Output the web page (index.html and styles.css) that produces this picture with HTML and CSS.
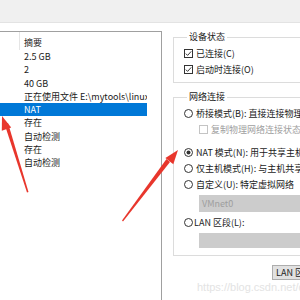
FILE: index.html
```html
<!DOCTYPE html>
<html lang="zh-CN">
<head>
  <meta charset="UTF-8">
  <title>虚拟机设置</title>
  <link rel="stylesheet" href="styles.css">
</head>
<body>
  <div class="topbar"></div>

  <div class="main">
    <div class="list">
      <div class="list-head"><span class="col-sep"></span>摘要</div>
      <div class="row">2.5 GB</div>
      <div class="row">2</div>
      <div class="row">40 GB</div>
      <div class="row">正在使用文件 E:\mytools\linux\centos.vmdk</div>
      <div class="row selected">NAT</div>
      <div class="row">存在</div>
      <div class="row">自动检测</div>
      <div class="row">存在</div>
      <div class="row">自动检测</div>
    </div>

    <div class="settings">
      <fieldset class="group">
        <legend>设备状态</legend>
        <div class="opt first">
          <svg class="box" viewBox="0 0 9 9"><rect x="0.5" y="0.5" width="8" height="8" fill="#fff" stroke="#333"/><path d="M1.8 4.6 L3.6 6.4 L7.2 2.4" fill="none" stroke="#333" stroke-width="1"/></svg>
          <span>已连接(C)</span>
        </div>
        <div class="opt">
          <svg class="box" viewBox="0 0 9 9"><rect x="0.5" y="0.5" width="8" height="8" fill="#fff" stroke="#333"/><path d="M1.8 4.6 L3.6 6.4 L7.2 2.4" fill="none" stroke="#333" stroke-width="1"/></svg>
          <span>启动时连接(O)</span>
        </div>
      </fieldset>

      <fieldset class="group net">
        <legend>网络连接</legend>
        <div class="opt first">
          <svg class="radio" viewBox="0 0 9 9"><circle cx="4.5" cy="4.5" r="4" fill="#fff" stroke="#333"/></svg>
          <span>桥接模式(B): 直接连接物理网络</span>
        </div>
        <div class="opt sub disabled">
          <svg class="box" viewBox="0 0 9 9"><rect x="0.5" y="0.5" width="8" height="8" fill="#fff" stroke="#c4c4c4"/></svg>
          <span>复制物理网络连接状态(P)</span>
        </div>
        <div class="opt gap">
          <svg class="radio" viewBox="0 0 9 9"><circle cx="4.5" cy="4.5" r="4" fill="#fff" stroke="#333"/><circle cx="4.5" cy="4.5" r="2" fill="#333"/></svg>
          <span>NAT 模式(N): 用于共享主机的 IP 地址</span>
        </div>
        <div class="opt">
          <svg class="radio" viewBox="0 0 9 9"><circle cx="4.5" cy="4.5" r="4" fill="#fff" stroke="#333"/></svg>
          <span>仅主机模式(H): 与主机共享的专用网络</span>
        </div>
        <div class="opt">
          <svg class="radio" viewBox="0 0 9 9"><circle cx="4.5" cy="4.5" r="4" fill="#fff" stroke="#333"/></svg>
          <span>自定义(U): 特定虚拟网络</span>
        </div>
        <div class="select">VMnet0</div>
        <div class="opt lan">
          <svg class="radio" viewBox="0 0 9 9"><circle cx="4.5" cy="4.5" r="4" fill="#fff" stroke="#333"/></svg>
          <span>LAN 区段(L):</span>
        </div>
        <div class="select empty"></div>
      </fieldset>

      <div class="buttons">
        <button class="btn">LAN 区段(S)...</button>
      </div>
    </div>
  </div>

  <div class="watermark">https://blog.csdn.net/qq_42</div>

  <svg class="arrows" viewBox="0 0 300 300">
    <polygon points="28.5,192 27,192.5 4.5,124 8,123" fill="#e8362c"/>
    <polygon points="2,116 11.2,127.6 1.8,130.8" fill="#e8362c"/>
    <polygon points="123,221.5 122,220.5 166.5,159 170,162" fill="#e8362c"/>
    <polygon points="178,150 173.3,164.2 165.4,158" fill="#e8362c"/>
  </svg>
</body>
</html>
```

FILE: styles.css
```css
body {
  margin: 0;
  width: 300px;
  height: 300px;
  overflow: hidden;
  position: relative;
  background-color: #fff;
  color: #1a1a1a;
  font-family: "Noto Sans CJK SC", "Noto Sans", sans-serif;
  font-size: 9px;
}

.topbar {
  height: 22px;
  background-color: #f0f0f0;
  border-bottom: 1px solid #e3e3e3;
}

.main {
  display: flex;
  margin-top: 8px;
  height: 269px;
}

.list {
  width: 161px;
  flex-shrink: 0;
  border-top: 1px solid #a0a0a0;
  border-right: 1px solid #a0a0a0;
  overflow: hidden;
}

.list-head {
  position: relative;
  margin-top: 4px;
  height: 14px;
  line-height: 14px;
  padding-left: 24px;
}

.col-sep {
  position: absolute;
  left: 19px;
  top: -4px;
  width: 1px;
  height: 18px;
  background-color: #e5e5e5;
}

.row {
  width: 123px;
  height: 13.25px;
  line-height: 13.25px;
  padding-left: 24px;
  white-space: nowrap;
  overflow: hidden;
}

.row.selected {
  background-color: #0078d7;
  color: #fff;
}

.settings {
  flex: 1;
  overflow: hidden;
  padding-left: 11px;
}

.group {
  width: 200px;
  margin: 0;
  padding: 2px 0 5px 10px;
  border: 1px solid #dcdcdc;
}

.group legend {
  height: 12px;
  line-height: 12px;
  padding: 0 2px;
  margin-left: 3px;
}

.group.net {
  margin-top: 8px;
  padding-bottom: 7px;
}

.opt {
  display: flex;
  align-items: center;
  height: 16px;
  white-space: nowrap;
}

.opt svg {
  width: 9px;
  height: 9px;
  flex-shrink: 0;
  margin-right: 3px;
}

.opt.sub {
  padding-left: 15px;
  height: 16px;
}

.opt.disabled {
  color: #a0a0a0;
}

.opt.gap {
  margin-top: 7px;
}

.opt.lan {
  margin-top: 2px;
}

.opt.lan svg {
  margin-right: 1px;
}

.select {
  margin: 3px 0 0 15px;
  height: 17px;
  line-height: 17px;
  padding-left: 3px;
  background-color: #cccccc;
  color: #9e9e9e;
}

.select.empty {
  height: 15px;
}

.buttons {
  margin-top: 9px;
  padding-left: 99px;
}

.btn {
  height: 15px;
  width: 70px;
  padding: 0 0 0 3px;
  text-align: left;
  font-family: "Noto Sans CJK SC", "Noto Sans", sans-serif;
  font-size: 9px;
  line-height: 13px;
  color: #1a1a1a;
  background-color: #e1e1e1;
  border: 1px solid #adadad;
  white-space: nowrap;
}

.watermark {
  position: absolute;
  left: 197px;
  top: 281px;
  font-family: "Liberation Sans", Arial, sans-serif;
  font-size: 11px;
  color: #e3e3e3;
  white-space: nowrap;
}

.arrows {
  position: absolute;
  left: 0;
  top: 0;
  width: 300px;
  height: 300px;
  pointer-events: none;
}
```
